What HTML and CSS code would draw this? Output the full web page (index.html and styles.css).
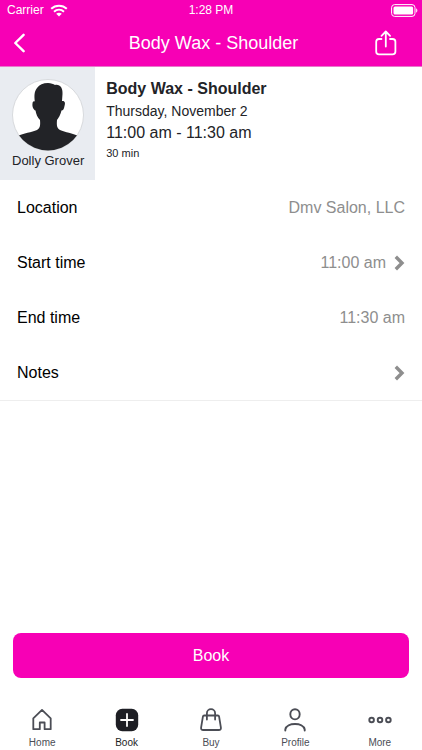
FILE: index.html
```html
<!DOCTYPE html>
<html lang="en">
<head>
<meta charset="utf-8">
<meta name="viewport" content="width=device-width, initial-scale=1">
<title>Body Wax - Shoulder</title>
<link rel="stylesheet" href="styles.css">
</head>
<body>
<header class="top">
  <div class="status">
    <div class="carrier">
      <span>Carrier</span>
      <svg width="18" height="13" viewBox="0 0 18 13" fill="none" stroke="currentColor" stroke-width="2" aria-hidden="true"><path d="M1.200 4.700C5.500.6 12.500.6 16.800 4.700M4 7.700C6.900 5.100 11.100 5.100 14 7.700"/><path d="M6.200 9.800C7.900 8.300 10.100 8.300 11.800 9.800L9 12.600Z" fill="currentColor" stroke="none"/></svg>
    </div>
    <span class="clock">1:28 PM</span>
    <svg class="battery" width="27" height="13" viewBox="0 0 27 13" aria-hidden="true"><rect x=".6" y=".6" width="23.400" height="11.800" rx="3" fill="none" stroke="currentColor"/><rect x="2.500" y="2.500" width="19.600" height="8" rx="1.500" fill="currentColor"/><path d="M25.200 4.300C26.800 5 26.800 8 25.200 8.700Z" fill="currentColor"/></svg>
  </div>
  <nav class="bar" aria-label="Appointment">
    <button class="icon-button" type="button" aria-label="Back"><svg width="12" height="20" viewBox="0 0 12 20" fill="none" stroke="currentColor" stroke-width="2.400" stroke-linecap="round" stroke-linejoin="round" aria-hidden="true"><path d="M10.600 1.800L2.300 10L10.600 18.200"/></svg></button>
    <h1 class="title">Body Wax - Shoulder</h1>
    <button class="icon-button share" type="button" aria-label="Share"><svg width="22" height="26" viewBox="0 0 22 26" fill="none" stroke="currentColor" stroke-width="1.800" stroke-linecap="round" stroke-linejoin="round" aria-hidden="true"><path d="M6.500 9H4Q1.200 9 1.200 11.800V21.500Q1.200 24.400 4 24.400H17.500Q20.400 24.400 20.400 21.500V11.800Q20.400 9 17.500 9H15M10.800 16.500V1.500M6.500 5.800L10.800 1.500L15.100 5.800"/></svg></button>
  </nav>
</header>
<main>
  <section class="summary">
    <div class="staff">
      <svg class="avatar" width="72" height="72" viewBox="0 0 72 72" aria-hidden="true"><defs><clipPath id="face"><circle cx="36" cy="36" r="35.500"/></clipPath></defs><circle cx="36" cy="36" r="35.500" fill="#fff" stroke="#d8dadd"/><path clip-path="url(#face)" fill="#222327" d="M36 4C39 4 41.500 5 43 6C48 5 51 9 50.500 15L50 22C53 21.500 53.500 24 52.500 27C52 30 51 31.500 49.500 31.500C48.500 36 46.500 39 45 41C44.500 47 45 49 48 51C53 53.500 61 54 66 57L72 72H0L6 57C11 54 20 53.500 25 51C28 49 28.500 47 28 41C25.500 38.500 24 35 23.500 31.500C21.500 31 20 27.500 20.500 24.500C20.700 22.500 21.500 22 22.800 22.500C22.300 17 22 13 25 9C27.500 5.500 31 4 36 4Z"/></svg>
      <span>Dolly Grover</span>
    </div>
    <div class="details">
      <h2 class="service">Body Wax - Shoulder</h2>
      <p class="date">Thursday, November 2</p>
      <p class="time">11:00 am - 11:30 am</p>
      <p class="duration">30 min</p>
    </div>
  </section>
  <div class="rows">
    <div class="row"><span>Location</span><span class="value">Dmv Salon, LLC</span></div>
    <button class="row" type="button"><span>Start time</span><span class="value">11:00 am <svg width="11" height="16" viewBox="0 0 11 16" fill="none" stroke="currentColor" stroke-width="3.400" aria-hidden="true"><path d="M1.800 1.700L8 8L1.800 14.300"/></svg></span></button>
    <div class="row"><span>End time</span><span class="value">11:30 am</span></div>
    <button class="row" type="button"><span>Notes</span><span class="value"><svg width="11" height="16" viewBox="0 0 11 16" fill="none" stroke="currentColor" stroke-width="3.400" aria-hidden="true"><path d="M1.800 1.700L8 8L1.800 14.300"/></svg></span></button>
  </div>
</main>
<footer class="bottom">
  <button class="book" type="button">Book</button>
  <nav class="tabs" aria-label="Main">
    <a class="tab" href="#home"><svg width="24" height="24" viewBox="0 0 24 24" fill="none" stroke="currentColor" stroke-width="1.800" stroke-linejoin="round" aria-hidden="true"><path d="M3.300 10.300L12 1.900L20.700 10.300V21.200H14.600V14.500H9.800V21.200H3.300Z"/></svg>Home</a>
    <a class="tab active" href="#book" aria-current="page"><svg width="24" height="24" viewBox="0 0 24 24" aria-hidden="true"><rect x=".8" y=".8" width="22.400" height="22.400" rx="6.500" fill="currentColor"/><path d="M12 6V18M6 12H18" stroke="#fff" stroke-width="1.800" stroke-linecap="round"/></svg>Book</a>
    <a class="tab" href="#buy"><svg width="24" height="24" viewBox="0 0 24 24" fill="none" stroke="currentColor" stroke-width="1.800" stroke-linecap="round" stroke-linejoin="round" aria-hidden="true"><path d="M5.200 7.500H18.800Q19.900 7.500 20.100 8.600L21.900 19.600Q22.200 22 19.800 22H4.200Q1.800 22 2.100 19.600L3.900 8.600Q4.100 7.500 5.200 7.500ZM7.900 11.500V5.300A4.100 4.100 0 0 1 16.100 5.300V11.500"/></svg>Buy</a>
    <a class="tab" href="#profile"><svg width="24" height="24" viewBox="0 0 24 24" fill="none" stroke="currentColor" stroke-width="1.900" stroke-linecap="round" aria-hidden="true"><ellipse cx="12" cy="6.300" rx="4.700" ry="5.100"/><path d="M2.300 22.500V21.500C3.600 14.200 20.400 14.200 21.700 21.500V22.500"/></svg>Profile</a>
    <a class="tab" href="#more"><svg width="24" height="24" viewBox="0 0 24 24" fill="none" stroke="currentColor" stroke-width="1.900" aria-hidden="true"><circle cx="3.600" cy="12" r="2.300"/><circle cx="12" cy="12" r="2.300"/><circle cx="20.400" cy="12" r="2.300"/></svg>More</a>
  </nav>
</footer>
</body>
</html>
```
FILE: styles.css
```css
* { box-sizing: border-box; }
body {
  margin: 0;
  min-height: 100vh;
  display: flex;
  flex-direction: column;
  background: #fff;
  color: #000;
  font: 16px/20px "Liberation Sans", Arial, sans-serif;
}
h1, h2, p { margin: 0; }
button { border: 0; padding: 0; background: none; color: inherit; font: inherit; }
a { color: inherit; text-decoration: none; }
svg { display: block; flex: none; }

.top { border-bottom: 1px solid #e879cb; background: #f700b5; color: #fff; }
.status {
  display: grid;
  grid-template-columns: 1fr auto 1fr;
  align-items: center;
  height: 20px;
  padding: 0 4px;
  font-size: 12px;
}
.carrier { display: flex; align-items: center; gap: 6px; padding-left: 3px; }
.battery { justify-self: end; }
.bar {
  display: grid;
  grid-template-columns: 48px 1fr 40px;
  align-items: center;
  height: 46px;
  padding: 0 16px 0 13px;
}
.title { text-align: center; font-size: 18px; font-weight: 400; }
.icon-button { display: flex; align-items: center; height: 40px; }
.share { justify-content: center; }

.summary { display: flex; }
.staff {
  display: flex;
  flex-direction: column;
  align-items: center;
  padding: 12px 11px 9px 12px;
  background: #e9ecf1;
  color: #222327;
  font-size: 13px;
}
.details { padding: 11px; color: #222327; }
.service { font-size: 16px; line-height: 22px; }
.date { font-size: 14px; line-height: 22px; }
.time { line-height: 22px; }
.duration { font-size: 11px; line-height: 18px; }

.rows { border-bottom: 1px solid #eee; }
.row {
  display: flex;
  justify-content: space-between;
  align-items: center;
  width: 100%;
  height: 55px;
  padding: 0 17px;
  text-align: left;
}
.value { display: flex; align-items: center; gap: 8px; color: #8e8e8e; }

.bottom { margin-top: auto; }
.book {
  display: block;
  width: calc(100% - 26px);
  height: 45px;
  margin: 0 13px 30px;
  border-radius: 8px;
  background: #f700b5;
  color: #fff;
}
.tabs { display: grid; grid-template-columns: repeat(5, 1fr); }
.tab {
  display: flex;
  flex-direction: column;
  align-items: center;
  gap: 4px;
  color: #4b4d55;
  font-size: 10px;
  line-height: 14px;
}
.active { color: #1d1e24; }
```
